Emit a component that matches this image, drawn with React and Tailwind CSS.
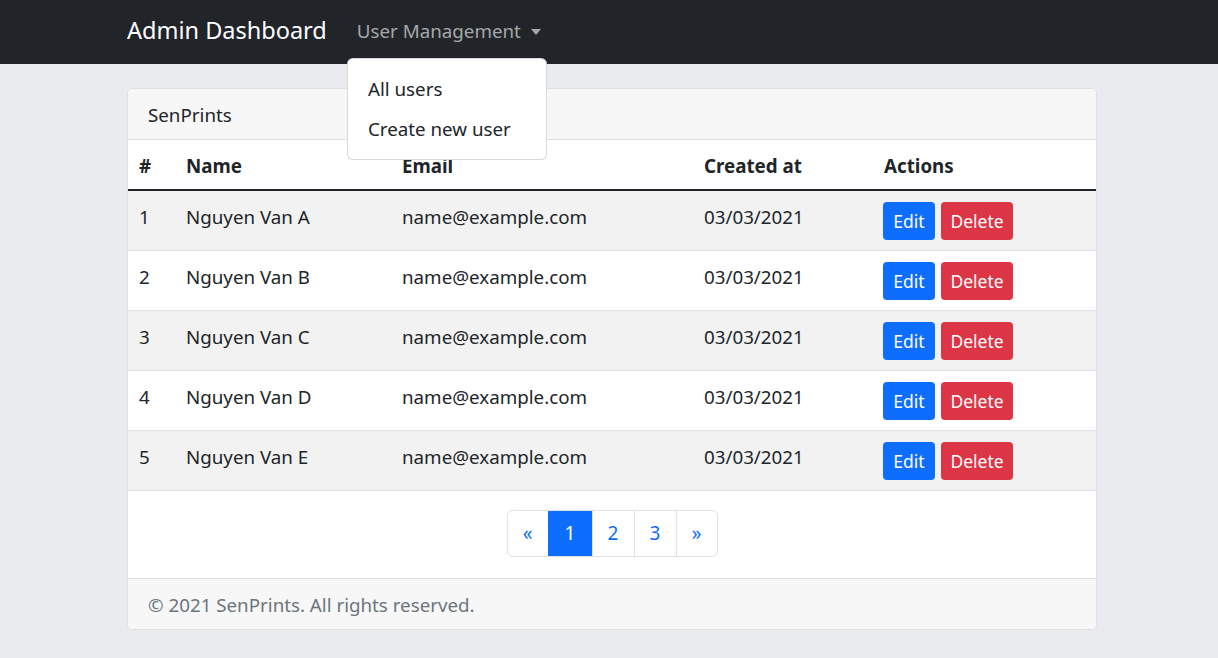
import { useState } from 'react'

const USERS = [
  { id: 1, name: 'Nguyen Van A' },
  { id: 2, name: 'Nguyen Van B' },
  { id: 3, name: 'Nguyen Van C' },
  { id: 4, name: 'Nguyen Van D' },
  { id: 5, name: 'Nguyen Van E' },
]

const COLS = 'grid grid-cols-[47px_216px_302px_180px_1fr]'

export default function App() {
  const [page] = useState(1)

  return (
    <div className="min-h-[658px] bg-[#e9ebef] text-[#212529] font-['Noto_Sans',sans-serif]">
      {/* navbar */}
      <nav className="h-16 bg-[#212529]">
        <div className="relative flex h-full items-center pl-[127px]">
          <span className="-mt-[2px] text-[23.5px] text-white">Admin Dashboard</span>
          <button className="-mt-[2px] ml-[30px] flex items-center text-[18.75px] text-white/60">
            User Management
            <span className="ml-[10px] mt-[1px] h-0 w-0 border-x-[5px] border-t-[6px] border-x-transparent border-t-white/60" />
          </button>

          {/* dropdown */}
          <div className="absolute left-[347px] top-[58px] z-10 w-[200px] rounded-md border border-black/15 bg-white py-[10px]">
            <a className="block px-5 py-2 text-[18.75px] leading-[24px]">All users</a>
            <a className="block px-5 py-2 text-[18.75px] leading-[24px]">Create new user</a>
          </div>
        </div>
      </nav>

      <main className="pl-[127px] pt-6 pb-7">
        <div className="w-[970px] overflow-hidden rounded-md border border-[#dfdfdf] bg-white">
          <div className="flex h-[51px] items-center border-b border-[#dfdfdf] bg-[#f7f7f7] px-5 pt-[2px] text-[18.75px]">
            SenPrints
          </div>

          {/* table head */}
          <div className={`${COLS} h-[51px] items-center border-b-2 border-[#212529] pt-[3px] text-[18.75px] font-bold`}>
            <div className="pl-[11px]">#</div>
            <div className="pl-[11px]">Name</div>
            <div className="pl-[11px]">Email</div>
            <div className="pl-[11px]">Created at</div>
            <div className="pl-[11px]">Actions</div>
          </div>

          {USERS.map((u, i) => (
            <div
              key={u.id}
              className={`${COLS} h-[60px] border-b border-[#dee2e6] text-[18.75px] ${i % 2 === 0 ? 'bg-[#f2f2f2]' : 'bg-white'}`}
            >
              <div className="pl-[11px] pt-[12px]">{u.id}</div>
              <div className="pl-[11px] pt-[12px]">{u.name}</div>
              <div className="pl-[11px] pt-[12px]">name@example.com</div>
              <div className="pl-[11px] pt-[12px]">03/03/2021</div>
              <div className="flex items-start gap-[6px] pl-[10px] pt-[11px]">
                <button className="h-[38px] w-[52px] rounded-[4px] bg-[#0d6efd] text-[17.5px] text-white">Edit</button>
                <button className="h-[38px] w-[72px] rounded-[4px] bg-[#dc3545] text-[17.5px] text-white">Delete</button>
              </div>
            </div>
          ))}

          {/* pagination */}
          <div className="flex justify-center pt-[19px] pb-[21px]">
            <div className="flex h-[47px] overflow-hidden rounded-md border border-[#dee2e6] text-[19px] text-[#0d6efd]">
              <span className="flex w-[40px] items-center justify-center">«</span>
              {[1, 2, 3].map((n) => (
                <span
                  key={n}
                  className={`flex items-center justify-center border-l ${n === page ? 'w-[44px] border-[#0d6efd] bg-[#0d6efd] text-white' : 'w-[42px] border-[#dee2e6]'}`}
                >
                  {n}
                </span>
              ))}
              <span className="flex w-[41px] items-center justify-center border-l border-[#dee2e6]">»</span>
            </div>
          </div>

          <div className="flex h-[51px] items-center border-t border-[#dfdfdf] bg-[#f7f7f7] px-5 pt-[2px] text-[18.75px] text-[#6c757d]">
            © 2021 SenPrints. All rights reserved.
          </div>
        </div>
      </main>
    </div>
  )
}
